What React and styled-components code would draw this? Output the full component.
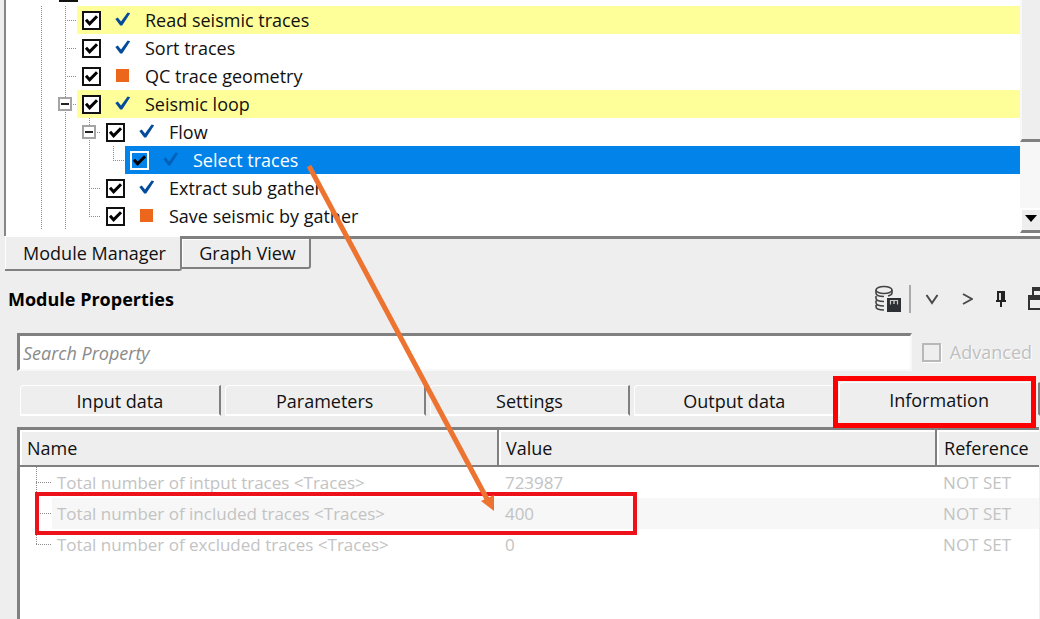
import React, { useState } from 'react'
import styled, { createGlobalStyle, css } from 'styled-components'

const treeRows = [
  { name: 'Read seismic traces', guides: ['line', 'tee'], status: 'done', marked: true },
  { name: 'Sort traces', guides: ['line', 'tee'], status: 'done' },
  { name: 'QC trace geometry', guides: ['line', 'tee'], status: 'idle' },
  { name: 'Seismic loop', guides: ['line', 'open'], status: 'done', marked: true },
  { name: 'Flow', guides: ['line', 'line', 'open'], status: 'done' },
  { name: 'Select traces', guides: ['line', 'line', 'line', 'elbow'], status: 'done', selected: true },
  { name: 'Extract sub gather', guides: ['line', 'line', 'tee'], status: 'done' },
  { name: 'Save seismic by gather', guides: ['line', 'line', 'elbow'], status: 'idle' },
]

const infoRows = [
  { name: 'Total number of intput traces <Traces>', value: '723987', guide: 'tee' },
  { name: 'Total number of included traces <Traces>', value: '400', guide: 'tee', framed: true },
  { name: 'Total number of excluded traces <Traces>', value: '0', guide: 'elbow' },
]

const propertyTabs = ['Input data', 'Parameters', 'Settings', 'Output data', 'Information']

function Tick({ className }) {
  return (
    <svg className={className} width="19" height="19" viewBox="0 0 19 19" aria-hidden="true">
      <path d="M4 8.800 L7.600 12.800 L15 5.200" fill="none" stroke="#000" strokeWidth="3" />
    </svg>
  )
}

function StatusIcon({ status, dim }) {
  if (status === 'idle') {
    return (
      <svg width="16" height="16" viewBox="0 0 16 16" aria-hidden="true">
        <rect x="1" y="1" width="13" height="13" fill="#ec671c" />
      </svg>
    )
  }
  return (
    <svg width="16" height="16" viewBox="0 0 16 16" aria-hidden="true">
      <path
        d="M0.300 7 L2.800 5.600 L6 9.600 L12.600 0.500 L15.200 1.300 L7.200 13.600 L5.200 13.600 Z"
        fill={dim ? '#0461ba' : '#044c9b'}
      />
    </svg>
  )
}

function TreeRow({ row }) {
  const [checked, setChecked] = useState(true)
  return (
    <Row>
      <Indent>
        {row.guides.map((g, i) => (
          <Guide key={i} $kind={g}>
            {g === 'open' && <Expander type="button" aria-label={'Collapse ' + row.name} />}
          </Guide>
        ))}
      </Indent>
      <RowBody $marked={row.marked} $selected={row.selected}>
        <CheckWrap>
          <Check
            type="checkbox"
            checked={checked}
            $selected={row.selected}
            onChange={() => setChecked(!checked)}
          />
          {checked && <CheckTick />}
          <StatusIcon status={row.status} dim={row.selected} />
          <span>{row.name}</span>
        </CheckWrap>
      </RowBody>
    </Row>
  )
}

function Toolbar() {
  return (
    <Tools>
      <ToolButton type="button" aria-label="Save to database">
        <svg width="28" height="28" viewBox="0 0 28 28" fill="none" stroke="#444" strokeWidth="1.6">
          <ellipse cx="11" cy="5" rx="8" ry="3.500" />
          <path d="M3 5v3c0 2 3 3.500 8 3.500M19 5v3c0 1.500-2 2.500-4 3M3 11v2c0 2 3 3.500 8 3.500M3 15.500v2c0 2 3 3.500 8 3.500M3 20v1.500c0 2 3 3.500 8 3.500" />
          <path d="M14 13h14v14H14z" fill="#2c2f33" stroke="none" />
          <path d="M17.500 19.500v-4h7v4" stroke="#ccc" strokeWidth="1.2" />
          <path d="M21 16v3" stroke="#ccc" strokeWidth="1.4" />
        </svg>
      </ToolButton>
      <Separator />
      <ToolButton type="button" aria-label="Expand">
        <svg width="14" height="14" viewBox="0 0 14 14" fill="none" stroke="#4a4a4a" strokeWidth="2">
          <path d="M1.500 3 L7 11 L12.500 3" />
        </svg>
      </ToolButton>
      <ToolButton type="button" aria-label="Next">
        <svg width="14" height="14" viewBox="0 0 14 14" fill="none" stroke="#4a4a4a" strokeWidth="2">
          <path d="M4 2 L13 7 L4 12" />
        </svg>
      </ToolButton>
      <ToolButton type="button" aria-label="Pin">
        <svg width="14" height="18" viewBox="0 0 14 18">
          <path d="M4 1h8v9h1v2H9v5H7v-5H3v-2h1z" fill="#222" />
          <path d="M6 3h2v7H6z" fill="#ddd" />
        </svg>
      </ToolButton>
      <ToolButton type="button" aria-label="Float window">
        <svg width="24" height="24" viewBox="0 0 24 24">
          <path d="M5 0h19v15h-5v-2h3V4H7v5H5z" fill="#333" />
          <path d="M1 8h18v15H1z" fill="#333" />
          <path d="M3 13h14v8H3z" fill="#eee" />
        </svg>
      </ToolButton>
    </Tools>
  )
}

function App() {
  const [tab, setTab] = useState('Information')
  const [search, setSearch] = useState('')

  return (
    <>
      <GlobalStyle />
      <Page>
        <TreePane>
          <Tree>
            <ClippedRow>
              <Check type="checkbox" aria-label="Job" defaultChecked />
            </ClippedRow>
            {treeRows.map((row) => (
              <TreeRow key={row.name} row={row} />
            ))}
          </Tree>
          <ScrollBar>
            <Thumb />
            <Track />
            <ScrollButton type="button" aria-label="Scroll down">
              <svg width="12" height="7" viewBox="0 0 12 7">
                <path d="M0 0h12L6 7z" fill="#000" />
              </svg>
            </ScrollButton>
          </ScrollBar>
        </TreePane>

        <ViewTabs>
          <ViewTab type="button" $active>Module Manager</ViewTab>
          <ViewTab type="button">Graph View</ViewTab>
          <ViewFill />
        </ViewTabs>

        <TitleBar>
          <h2>Module Properties</h2>
          <Toolbar />
        </TitleBar>

        <SearchBar>
          <SearchInput
            type="text"
            aria-label="Search Property"
            placeholder="Search Property"
            value={search}
            onChange={(e) => setSearch(e.target.value)}
          />
          <Advanced>
            <input type="checkbox" disabled />
            <span>Advanced</span>
          </Advanced>
        </SearchBar>

        <PropertyTabs>
          {propertyTabs.map((t) => (
            <PropertyTab key={t} type="button" $active={t === tab} onClick={() => setTab(t)}>
              {t}
              {t === 'Information' && <TabFrame />}
            </PropertyTab>
          ))}
        </PropertyTabs>

        <TableBox>
          <InfoTable>
            <colgroup>
              <NameCol />
              <ValueCol />
              <col />
            </colgroup>
            <thead>
              <tr>
                <th>Name</th>
                <th>Value</th>
                <th>Reference</th>
              </tr>
            </thead>
            <tbody>
              {infoRows.map((r) => (
                <tr key={r.name}>
                  <td>
                    <NameCell>
                      <Guide $kind={r.guide} $wide />
                      <span>{r.name}</span>
                      {r.framed && <RowFrame />}
                    </NameCell>
                  </td>
                  <td>{r.value}</td>
                  <td>NOT SET</td>
                </tr>
              ))}
            </tbody>
          </InfoTable>
        </TableBox>

        <Arrow viewBox="0 0 200 360" aria-hidden="true">
          <path d="M9 6 L187 339" stroke="#ed7331" strokeWidth="5" />
          <path d="M181 341 L194 335 L194 351z" fill="#ed7331" />
        </Arrow>
      </Page>
    </>
  )
}
export default App

const GlobalStyle = createGlobalStyle`
  * {
    box-sizing: border-box;
  }
  body {
    margin: 0;
    overflow: hidden;
    background: #eee;
    color: #111;
    font-family: "Open Sans", "Noto Sans", sans-serif;
    font-size: 18px;
    line-height: 24px;
  }
  button, input {
    font: inherit;
    color: inherit;
    margin: 0;
  }
`

const Page = styled.main`
  position: relative;
  display: flex;
  flex-direction: column;
  min-height: 100vh;
`

const TreePane = styled.section`
  display: flex;
  margin-left: 4px;
  border-left: 2px solid #868686;
  background: #fff;
`

const Tree = styled.div`
  flex: 1;
  padding: 0 0 6px 23px;
`

const Row = styled.div`
  display: flex;
  height: 28px;
`

const ClippedRow = styled.div`
  display: flex;
  align-items: flex-end;
  height: 6px;
  overflow: hidden;
  padding: 0 0 4px 30px;
`

const Indent = styled.div`
  display: flex;
`

const dotsDown = 'repeating-linear-gradient(to bottom, #8c8c8c 0 1px, transparent 1px 2px)'
const dotsAcross = 'repeating-linear-gradient(to right, #8c8c8c 0 1px, transparent 1px 2px)'

const Guide = styled.span`
  display: flex;
  align-items: center;
  justify-content: center;
  align-self: stretch;
  width: ${({ $wide }) => ($wide ? '32px' : '24px')};
  background-repeat: no-repeat;
  ${({ $kind, $wide }) =>
    $kind === 'line'
      ? css`
          background-image: ${dotsDown};
          background-position: 12px 0;
          background-size: 1px 100%;
        `
      : css`
          background-image: ${dotsDown}, ${dotsAcross};
          background-position: ${$wide ? '16px' : '12px'} 0, right center;
          background-size: 1px ${$kind === 'elbow' ? '50%' : '100%'}, ${$wide ? '16px' : '12px'} 1px;
        `}
`

const Expander = styled.button`
  width: 14px;
  height: 14px;
  padding: 0;
  border: 2px solid #a4a4a4;
  background: linear-gradient(#222, #222) center / 8px 2px no-repeat #fff;
`

const RowBody = styled.div`
  display: flex;
  flex: 1;
  background: ${({ $marked, $selected }) => ($selected ? '#0283ea' : $marked ? '#ffff99' : 'transparent')};
  color: ${({ $selected }) => ($selected ? '#fff' : '#111')};
`

const CheckWrap = styled.label`
  display: grid;
  grid-template-columns: 19px 16px auto;
  align-items: center;
  column-gap: 14px;
  padding-left: 5px;
`

const Check = styled.input`
  appearance: none;
  grid-column: 1;
  grid-row: 1;
  width: 19px;
  height: 19px;
  flex: none;
  border: 2px solid ${({ $selected }) => ($selected ? '#fff' : '#111')};
  background: ${({ $selected }) => ($selected ? 'transparent' : '#fff')};
`

const CheckTick = styled(Tick)`
  grid-column: 1;
  grid-row: 1;
  pointer-events: none;
`

const ScrollBar = styled.div`
  display: flex;
  flex-direction: column;
  width: 20px;
  padding-bottom: 3px;
`

const Thumb = styled.div`
  flex: 21;
  background: #eee;
  border-left: 2px solid #f8f8f8;
  border-bottom: 3px solid #808080;
`

const Track = styled.div`
  flex: 10;
  background: #f7f7f7;
`

const ScrollButton = styled.button`
  display: flex;
  align-items: center;
  justify-content: center;
  height: 25px;
  padding: 0 0 4px;
  border: 0 solid #fff;
  border-width: 2px 0 3px 2px;
  border-bottom-color: #808080;
  background: #eee;
`

const ViewTabs = styled.div`
  display: flex;
  align-items: flex-start;
  padding-left: 5px;
`

const ViewTab = styled.button`
  height: ${({ $active }) => ($active ? '35px' : '33px')};
  width: ${({ $active }) => ($active ? '177px' : '129px')};
  padding: 0 0 0 4px;
  border: solid #808080;
  border-width: ${({ $active }) => ($active ? '0 2px 2px 0' : '3px 2px 2px 0')};
  border-bottom-right-radius: 3px;
  background: #eee;
  box-shadow: inset 1px 1px #fff;
`

const ViewFill = styled.div`
  flex: 1;
  border-top: 3px solid #808080;
`

const TitleBar = styled.header`
  display: flex;
  align-items: center;
  justify-content: space-between;
  height: 56px;
  padding-left: 8px;
  h2 {
    margin: 0;
    font-size: 18px;
    font-weight: 700;
    color: #000;
  }
`

const Tools = styled.div`
  display: flex;
  align-items: center;
  gap: 20px;
  margin-right: -11px;
`

const ToolButton = styled.button`
  display: flex;
  padding: 0;
  border: 0;
  background: none;
`

const Separator = styled.span`
  width: 2px;
  height: 28px;
  margin: 0 -6px 0 -12px;
  background: #aaa;
`

const SearchBar = styled.div`
  display: flex;
  align-items: center;
  gap: 10px;
  padding: 6px 8px 0 17px;
`

const SearchInput = styled.input`
  flex: 1;
  min-width: 0;
  height: 38px;
  padding: 0 3px;
  border: solid #808080;
  border-width: 3px 2px 2px 3px;
  border-right-color: #f8f8f8;
  border-bottom-color: #f8f8f8;
  background: #fff;
  &::placeholder {
    color: #8a8a8a;
    opacity: 1;
    font-style: italic;
  }
`

const Advanced = styled.label`
  display: flex;
  align-items: center;
  gap: 9px;
  color: #c0c0c0;
  text-shadow: 1px 1px #fff;
  input {
    appearance: none;
    width: 19px;
    height: 19px;
    border: 2px solid #b8b8b8;
    box-shadow: 1px 1px #fff;
  }
`

const PropertyTabs = styled.div`
  display: flex;
  align-items: flex-end;
  gap: 4px;
  height: 56px;
  padding: 0 0 11px 20px;
`

const PropertyTab = styled.button`
  position: relative;
  flex: 1;
  height: ${({ $active }) => ($active ? '34px' : '31px')};
  padding: 2px 0 0;
  border: solid #fff;
  border-width: 1px 2px 2px 1px;
  border-right-color: #808080;
  border-bottom-color: ${({ $active }) => ($active ? 'transparent' : '#fff')};
  border-top-left-radius: 4px;
  background: #eee;
`

const TabFrame = styled.span`
  position: absolute;
  inset: -7px 2px -14px -7px;
  border: 5px solid #fe0000;
`

const TableBox = styled.section`
  flex: 1;
  margin: 0 1px 0 17px;
  border: solid #808080;
  border-width: 3px 0 0 3px;
  background: #fff;
`

const InfoTable = styled.table`
  width: 100%;
  table-layout: fixed;
  border-collapse: separate;
  border-spacing: 0;
  text-align: left;
  th {
    height: 37px;
    padding: 0 7px;
    border-right: 2px solid #808080;
    border-bottom: 2px solid #808080;
    background: #eee;
    box-shadow: inset 2px 2px #fff;
    font-weight: 400;
    &:last-child {
      border-right: 0;
    }
  }
  td {
    height: 31px;
    padding: 0 6px;
    color: #c3c3c3;
    font-size: 17px;
  }
  td:first-child {
    padding: 0;
  }
  tbody tr:nth-child(2) {
    background: #f7f7f7;
  }
`

const NameCol = styled.col`
  width: 47%;
`

const ValueCol = styled.col`
  width: 43%;
`

const NameCell = styled.div`
  position: relative;
  display: flex;
  align-items: center;
  gap: 5px;
  height: 31px;
  ${Guide} {
    background-color: #fff;
  }
`

const RowFrame = styled.span`
  position: absolute;
  z-index: 1;
  inset: -6px -138px -6px 15px;
  border: 4px solid #ed111a;
`

const Arrow = styled.svg`
  position: absolute;
  z-index: 2;
  left: 300px;
  top: 160px;
  width: 200px;
  height: 360px;
  fill: none;
  pointer-events: none;
`
